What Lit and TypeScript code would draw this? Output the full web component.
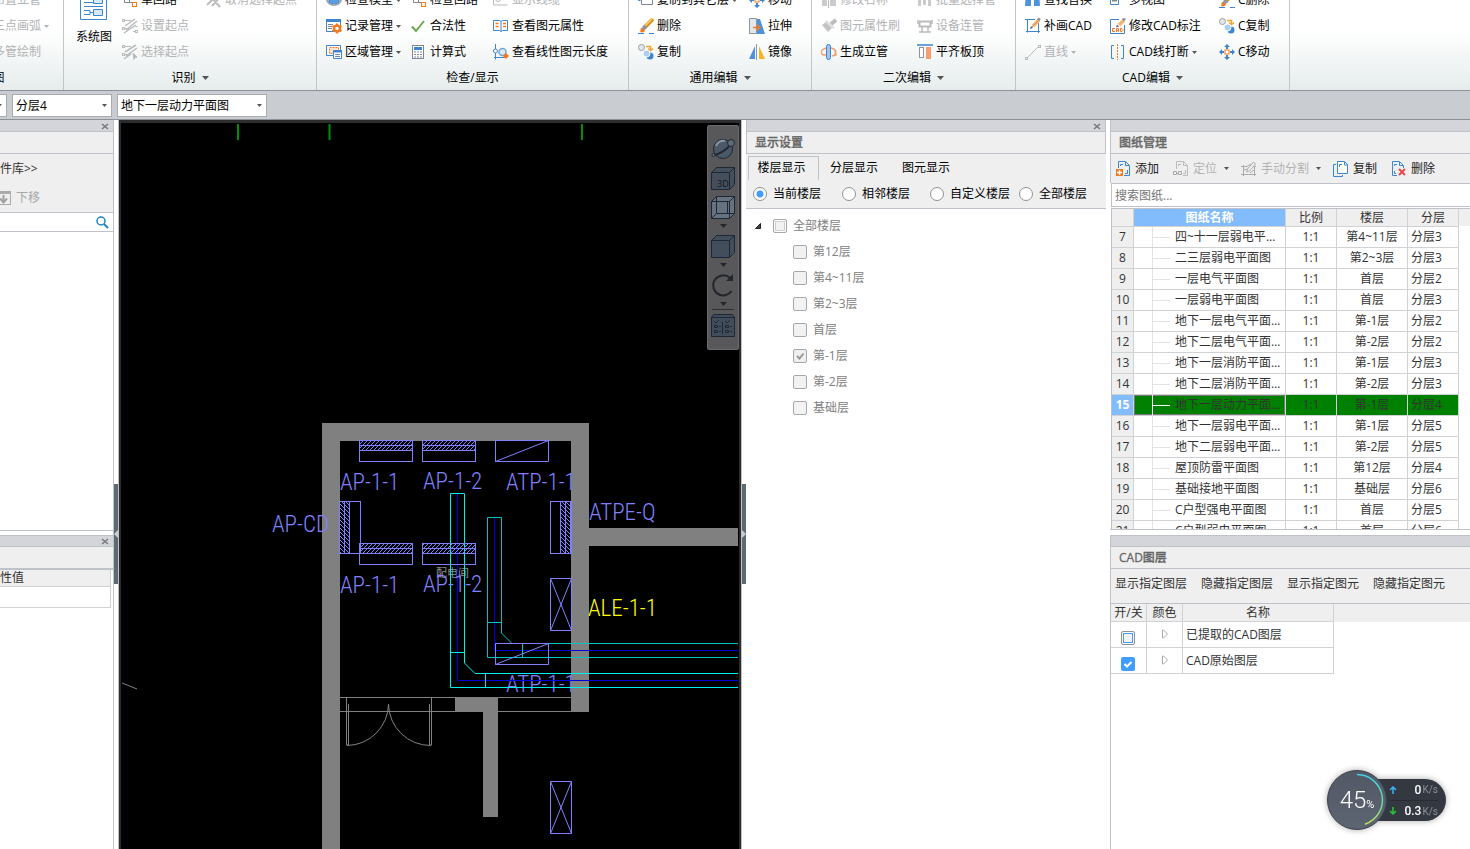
import { LitElement, html, svg, css, nothing, TemplateResult, SVGTemplateResult } from "lit";
import { customElement, property, state } from "lit/decorators.js";
import { classMap } from "lit/directives/class-map.js";

const BLUE = "#3d85d1";
const ORANGE = "#f47a20";
const MUTED = "#b9bbbd";

const glyphs: Record<string, SVGTemplateResult> = {
  loop: svg`<path d="M2.500 2v8.500h8M7.500 10V3" stroke="#7b8794"/><rect x="10.500" y="10.500" width="4" height="4" stroke="${ORANGE}"/>`,
  startSet: svg`<g stroke="${MUTED}"><rect x="0.500" y="1.500" width="2" height="2"/><rect x="0.500" y="9.500" width="2" height="2"/><rect x="13.500" y="12.500" width="2" height="2"/><path d="M3 2.500h6M3 10.500h4M11 13.500h2M13.500 8.500h2"/><path d="M13 1L3 8M15 3L4 12M14 7L2 15" stroke-width="1.500"/></g>`,
  startPick: svg`<g stroke="${MUTED}"><rect x="0.500" y="1.500" width="2" height="2"/><rect x="0.500" y="9.500" width="2" height="2"/><path d="M3 2.500h6M3 10.500h4"/><path d="M14 1L3 8M15 4L4 12M9 10L2 15" stroke-width="1.500"/><path d="M11 9l4 4-2 .500-1 2z" fill="${MUTED}"/></g>`,
  startCancel: svg`<g stroke="${MUTED}" stroke-width="2"><path d="M12 2L1 13M15 4L6 14M6 6l8 9M1 4l4 4"/></g>`,
  model: svg`<path d="M3 3l5-3 5 3v7l-5 3-5-3z" fill="#5a9fe6" stroke="#3777bd"/><path d="M1 7c0 8 14 8 14 0" stroke="#9aa5b0" stroke-width="2"/>`,
  record: svg`<path d="M.500 1.500h14v12H.500z" fill="#fff" stroke="${BLUE}"/><path d="M0 2.500h15" stroke="${BLUE}" stroke-width="3"/><path d="M2 6.500h5M2 8.500h4M2 10.500h4" stroke="#7b8794"/><circle cx="11" cy="10.500" r="3" stroke="${ORANGE}" stroke-width="2.500" fill="#fff"/><path d="M11 5.500v2M11 13.500v2M6.500 8l2 1M13.500 12l2 1M6.500 13l2-1M13.500 9l2-1" stroke="${ORANGE}" stroke-width="2"/>`,
  region: svg`<path d="M.500 1.500h14v10H.500z" fill="#fff" stroke="${BLUE}"/><path d="M3.500 3.500h9v6h-9z" fill="#fde3d0" stroke="${ORANGE}" stroke-dasharray="2 1"/><path d="M7.500 6.500h8v8h-8z" fill="#fff" stroke="${BLUE}"/><path d="M7 7.500h9" stroke="${BLUE}" stroke-width="2"/><path d="M9 10.500h5M9 12.500h5" stroke="#7b8794"/>`,
  check: svg`<path d="M1 8.500l4 4.500L13 3" stroke="#69a84f" stroke-width="2"/>`,
  calc: svg`<rect x="1.500" y="1.500" width="11" height="13" fill="#fff" stroke="#7b8794"/><path d="M3 4.500h8" stroke="${BLUE}" stroke-width="3"/><path d="M3 8h8M3 10.500h8M3 13h8" stroke="#7b8794" stroke-dasharray="2 1"/>`,
  lineView: svg`<path d="M.500 1v12h14" stroke="${MUTED}"/><circle cx="5" cy="7" r="2.500" stroke="${MUTED}"/>`,
  book: svg`<path d="M.500 2.500h6l1.500 1 1.500-1h5v10h-5l-1.500 1-1.500-1h-6zM8 3.500v10" fill="#fff" stroke="${BLUE}"/><path d="M2.500 5.500h3M2.500 8.500h3M10 5.500h3M10 8.500h3" stroke="${ORANGE}" stroke-width="1.500"/>`,
  length: svg`<path d="M2.500 0v13.500H14M1 13.500h1.500v2" stroke="${BLUE}"/><circle cx="2.500" cy="7" r="2" fill="#fff" stroke="${BLUE}"/><circle cx="9.500" cy="8" r="3.500" fill="#dce9f7" stroke="#7aa5d2" stroke-width="1.500"/><path d="M13 9l3 3-3 3-3-3z" fill="${ORANGE}"/>`,
  copyLayer: svg`<path d="M.500 0v8.500h2" stroke="${BLUE}"/><path d="M3.500 0h11v12.500h-11z" fill="#fff" stroke="#7b8794"/>`,
  brush: svg`<path d="M15 1L6 10" stroke="#d98d1e" stroke-width="4"/><path d="M15 0L6.500 8.500" stroke="#f7d46a" stroke-width="1.500"/><path d="M8 8l-2-1-3 4 2 2 4-3z" fill="#8a96a3"/><path d="M3 10c-1 1 0 3-1 4 2 1 5 0 5-2z" fill="${ORANGE}"/><path d="M0 15.500h6M11 15.500h5" stroke="${BLUE}"/>`,
  duplicate: svg`<circle cx="3.500" cy="3.500" r="3" fill="#e5e8eb" stroke="#959ea7"/><path d="M8 2.500h4.500v3M10 4.500l2.500 2 2.500-2" stroke="#f2a72c" stroke-width="1.500"/><circle cx="12" cy="12" r="3.500" fill="${BLUE}"/><circle cx="8.500" cy="9.500" r="3.500" fill="#a9cdf3" stroke="#fff"/>`,
  move: svg`<g fill="${BLUE}"><path d="M8 0l3 3H5zM8 16l3-3H5zM0 8l3-3v6zM16 8l-3-3v6z"/></g><path d="M8 2v3M8 11v3M2 8h3M11 8h3" stroke="${BLUE}" stroke-width="2"/><rect x="6" y="6" width="4" height="4" fill="#fff" stroke="${ORANGE}"/>`,
  stretch: svg`<path d="M.500.500h7v15h-7z" fill="#e3e7eb" stroke="#8b959f"/><path d="M8 1h3l5 15H8z" fill="#4c93dd"/><path d="M4 9.500h6M8 6.500l3 3-3 3" stroke="${ORANGE}" stroke-width="1.500"/>`,
  mirror: svg`<path d="M6 2v13H0z" fill="#4c93dd"/><path d="M10 2v13h6z" fill="#f5b427"/><path d="M7.500 0v16" stroke="#8b959f"/>`,
  rename: svg`<path d="M1 5h5v9H1zM9 3h6v11H9z" fill="#c9cbcd"/><path d="M7.500 0v16" stroke="${MUTED}"/>`,
  format: svg`<path d="M15 2l-5 4" stroke="${MUTED}" stroke-width="4"/><path d="M5 4l6 6-4 4-6-7z" fill="#c3c5c7"/><path d="M5 3l8 7" stroke="#dcdddf" stroke-width="2"/>`,
  riser: svg`<path d="M5 4C-1 6-1 10 3 11l3 0M10 4c5 1 6 5 3 7M11 12l4-1-1-4" stroke="#f2a072" stroke-width="1.500"/><rect x="5.500" y=".500" width="4" height="15" rx="2" fill="#9fc6f0" stroke="${BLUE}"/>`,
  batch: svg`<path d="M1 3h3v11H1zM6 1h3v12H6zM11 5h3v9h-3z" fill="#c9cbcd"/>`,
  device: svg`<rect x="2.500" y="3.500" width="11" height="5" stroke="${MUTED}" stroke-width="2"/><path d="M1 2v4M15 2v4M5 9v5M11 9v5M2 14h12" stroke="${MUTED}" stroke-width="1.500"/>`,
  align: svg`<path d="M0 1h16" stroke="${BLUE}" stroke-width="1.500"/><rect x="2.500" y="3.500" width="4" height="10" fill="#fff" stroke="#8b959f"/><path d="M9 3h5v12H9z" fill="#fa9b71"/>`,
  find: svg`<path d="M1 0h5v14H0zM9 0h5l1 14H9zM5 4h5v3H5z" fill="#4c93dd"/>`,
  addCad: svg`<path d="M2.500 1v13.500M0 1.500h10M13.500 5v10M1 13.500h14" stroke="${BLUE}"/><path d="M14 2L8 8" stroke="#f0b873" stroke-width="3.500"/><path d="M13 3l-6 6" stroke="#d98d3e" stroke-width="1"/><path d="M14 3l2-2-2-1-2 1z" fill="#7b8794"/><path d="M6 8l2 2-3 1z" fill="#5b6670"/>`,
  line: svg`<path d="M3 13L13 3" stroke="${MUTED}"/><rect x=".500" y="13.500" width="2" height="2" stroke="${MUTED}"/><rect x="13.500" y="1.500" width="2" height="2" stroke="${MUTED}"/>`,
  views: svg`<path d="M.500 0h8v12.500h-8zM9 5.500h6V0" stroke="${BLUE}"/><path d="M2 4.500h5M2 8.500h5" stroke="#7b8794" stroke-width="2"/>`,
  dimension: svg`<path d="M9 1.500H.500v14h14V7" stroke="${BLUE}"/><path d="M14 2L9 7" stroke="#f0b873" stroke-width="3.500"/><path d="M14 3l2-2-2-1-2 1z" fill="#7b8794"/><path d="M7 6.500l2 2-3 1z" fill="#5b6670"/><path d="M5 10.500H2.500v3H5M6.500 14v-3.500h2V14M6.500 12.500h2M10.500 10.500H12l1 1v1l-1 1h-1.500z" stroke="${ORANGE}"/>`,
  breakLine: svg`<path d="M4 1.500H1.500v13H4M11 1.500h2.500v13H11" stroke="${BLUE}"/><path d="M7.500 0v16" stroke="${ORANGE}" stroke-dasharray="2 1"/>`,
  moveDown: svg`<rect x=".500" y="1.500" width="14" height="13" stroke="#a9abad"/><path d="M0 2.500h15" stroke="#a9abad" stroke-width="3"/><path d="M7.500 5v7M4 8.500l3.500 4 3.500-4" stroke="#a0a2a4" stroke-width="2"/>`,
  search: svg`<circle cx="7" cy="7" r="4" stroke="#2383c4" stroke-width="1.500"/><path d="M10 10l4 4" stroke="#2383c4" stroke-width="2"/>`,
  sheetAdd: svg`<path d="M3.500 7V.500h7l4 4v10H9" stroke="${BLUE}" fill="none"/><path d="M10.500 1v3.500H14M5.500 5V3.500H8M12.500 9v3.500H10" stroke="${BLUE}"/><path d="M1 8h7v7H1z" fill="${ORANGE}"/><path d="M4.500 9v5M2 11.500h5" stroke="#fff" stroke-width="1.500"/>`,
  sheetPin: svg`<path d="M3.500 8V.500h7l4 4v10H10M10.500 1v3.500H14M5.500 5V3.500H8M12.500 9v3.500H10" stroke="${MUTED}"/><path d="M.500 10.500h3v3h-3zM5.500 10.500h3v3h-3zM3 12.500h3" stroke="#a4a6a8"/>`,
  split: svg`<g stroke="#a9abad"><path d="M0 5.500h6M13 5.500h2M0 13.500h15M2.500 4v11M13.500 6v9"/><path d="M12.500 1l2 2-6 7-3 1 1-3zM5 6l5-3M3 9l3-1M9 12l4-3"/></g>`,
  sheetCopy: svg`<path d="M4.500.500h7l3 3v9h-10z" fill="#fff" stroke="${BLUE}"/><path d="M11.500 1v3H15" stroke="${BLUE}"/><path d="M3 3.500H.500v12h9V14" stroke="${BLUE}"/><path d="M6.500 6V3.500H9" stroke="${BLUE}"/>`,
  sheetDelete: svg`<path d="M6 14.500H1.500V.500h7l4 4V7M8.500 1v3.500H12M3.500 5V3.500H6M5 12.500H3.500V10" stroke="${BLUE}"/><path d="M8 8l6 6M14 8l-6 6" stroke="#e8484c" stroke-width="2"/>`,
};

const icon = (name: string) =>
  html`<svg class="icon" width="16" height="16" viewBox="0 0 16 16" fill="none" aria-hidden="true">${glyphs[name]}</svg>`;

const caret = html`<svg class="caret" width="7" height="4" viewBox="0 0 7 4" aria-hidden="true"><path d="M0 0h7L3.500 4z" fill="currentColor"/></svg>`;

const base = css`
  * { box-sizing: border-box; }
  :host { font: 12px/16px "Open Sans", "Noto Sans CJK SC", sans-serif; color: #000; }
  button { font: inherit; color: inherit; background: none; border: 0; padding: 0; margin: 0; display: flex; align-items: center; white-space: nowrap; }
  button:disabled { color: #b1b3b5; }
  .icon { flex: none; display: block; }
  .caret { flex: none; color: #555; margin-left: 4px; }
  h2 { margin: 0; font: inherit; }
`;

type Cmd = { i?: string; t: string; off?: boolean; menu?: boolean } | null;

@customElement("ribbon-group")
class RibbonGroup extends LitElement {
  @property() label = "";
  @property({ type: Boolean }) menu = false;
  @property({ attribute: false }) columns: Cmd[][] = [];
  @property() tracks = "";
  static styles = [base, css`
    :host { display: flex; flex-direction: column; flex: none; border-right: 1px solid #c3c6c9; }
    .body { flex: 1; display: grid; padding-left: 9px; }
    .col { display: flex; flex-direction: column; }
    .cell { height: 26px; display: flex; align-items: center; }
    .cmd { gap: 3px; height: 24px; }
    .cmd .caret { margin-left: 0; width: 5px; height: 3px; }
    .cmd:disabled .caret { color: #b1b3b5; }
    .name { height: 26px; display: flex; align-items: center; justify-content: center; gap: 3px; }
    .name .caret { margin-left: 3px; }
  `];
  render() {
    return html`<div class="body" style="grid-template-columns:${this.tracks}">
        <slot></slot>
        ${this.columns.map((col) => html`<div class="col">${col.map((c) => html`<div class="cell">${c
          ? html`<button class="cmd" ?disabled=${c.off}>${c.i ? icon(c.i) : nothing}${c.t}${c.menu ? caret : nothing}</button>` : nothing}</div>`)}</div>`)}
      </div>
      <div class="name">${this.label}${this.menu ? caret : nothing}</div>`;
  }
}

@customElement("app-ribbon")
class AppRibbon extends LitElement {
  static styles = [base, css`
    :host { display: flex; align-items: flex-end; height: 91px; overflow: hidden; border-bottom: 1px solid #8c9296; background: linear-gradient(#fff 0 35%, #e6ecec); }
    ribbon-group { height: 104px; margin-bottom: -1px; }
    .edge { width: 142px; margin-left: -78px; }
    .recognise { width: 253px; }
    .inspect { width: 312px; }
    .general { width: 183px; }
    .second { width: 204px; }
    .cad { width: 274px; }
    .system { flex-direction: column; width: 42px; padding-top: 6px; gap: 8px; align-self: start; }
  `];
  render() {
    return html`
      <ribbon-group class="edge" label="绘图" tracks="43px 1fr" .columns=${[[], [
        { i: "riser", t: "布置立管", off: true }, { i: "line", t: "三点画弧", off: true, menu: true }, { i: "batch", t: "多管绘制", off: true }]]}></ribbon-group>
      <ribbon-group class="recognise" label="识别" menu tracks="49px 84px 1fr" .columns=${[
        [{ i: "loop", t: "单回路" }, { i: "startSet", t: "设置起点", off: true }, { i: "startPick", t: "选择起点", off: true }],
        [{ i: "startCancel", t: "取消选择起点", off: true }]]}>
        <button class="system">
          <svg width="28" height="28" viewBox="0 0 28 28" fill="none" aria-hidden="true"><path d="M.500.500h26v26H.500z" fill="#fff" stroke="${BLUE}"/><path d="M4 9.500h9M4 13.500h19M4 17.500h6v4H4M10 19.500h4" stroke="${BLUE}"/><path d="M13.500 5.500h9v5h-9zM13.500 16.500h9v6h-9z" fill="#d6e8fb" stroke="${BLUE}"/></svg>
          系统图
        </button>
      </ribbon-group>
      <ribbon-group class="inspect" label="检查/显示" tracks="85px 82px 1fr" .columns=${[
        [{ i: "model", t: "检查模型", menu: true }, { i: "record", t: "记录管理", menu: true }, { i: "region", t: "区域管理", menu: true }],
        [{ i: "loop", t: "检查回路" }, { i: "check", t: "合法性" }, { i: "calc", t: "计算式" }],
        [{ i: "lineView", t: "显示线缆", off: true }, { i: "book", t: "查看图元属性" }, { i: "length", t: "查看线性图元长度" }]]}></ribbon-group>
      <ribbon-group class="general" label="通用编辑" menu tracks="111px 1fr" .columns=${[
        [{ i: "copyLayer", t: "复制到其它层", menu: true }, { i: "brush", t: "删除" }, { i: "duplicate", t: "复制" }],
        [{ i: "move", t: "移动" }, { i: "stretch", t: "拉伸" }, { i: "mirror", t: "镜像" }]]}></ribbon-group>
      <ribbon-group class="second" label="二次编辑" menu tracks="96px 1fr" .columns=${[
        [{ i: "rename", t: "修改名称", off: true }, { i: "format", t: "图元属性刷", off: true }, { i: "riser", t: "生成立管" }],
        [{ i: "batch", t: "批量选择管", off: true }, { i: "device", t: "设备连管", off: true }, { i: "align", t: "平齐板顶" }]]}></ribbon-group>
      <ribbon-group class="cad" label="CAD编辑" menu tracks="85px 109px 1fr" .columns=${[
        [{ i: "find", t: "查找替换" }, { i: "addCad", t: "补画CAD" }, { i: "line", t: "直线", off: true, menu: true }],
        [{ i: "views", t: "多视图" }, { i: "dimension", t: "修改CAD标注" }, { i: "breakLine", t: "CAD线打断", menu: true }],
        [{ i: "brush", t: "C删除" }, { i: "duplicate", t: "C复制" }, { i: "move", t: "C移动" }]]}></ribbon-group>`;
  }
}

const HATCH_H = (x: number, y: number) => svg`<g stroke="#8080ff">
  <rect x=${x} y=${y} width="53" height="21" fill="none"/>
  <rect x=${x} y=${y} width="53" height="10" fill="url(#hatch)"/><path d="M${x} ${y + 5}h53"/></g>`;
const HATCH_V = (x: number, y: number, hx: number) => svg`<g stroke="#8080ff">
  <rect x=${x} y=${y} width="21" height="52" fill="none"/>
  <rect x=${hx} y=${y} width="10" height="52" fill="url(#hatch-back)"/><path d="M${hx + 5} ${y}v52"/></g>`;
const SLASH = (x: number, y: number) => svg`<path d="M${x} ${y}h53v21h-53zl0 21l53 -21" fill="none" stroke="#8080ff"/>`;
const CROSS = (x: number, y: number) => svg`<path d="M${x} ${y}h21v52h-21zl21 52M${x + 21} ${y}l-21 52" fill="none" stroke="#8080ff"/>`;

const tags: [number, number, string][] = [
  [340, 490, "AP-1-1"], [423, 489, "AP-1-2"], [272, 532, "AP-CD"],
  [589, 520, "ATPE-Q"], [340, 593, "AP-1-1"], [423, 592, "AP-1-2"],
];

@customElement("cad-view")
class CadView extends LitElement {
  static styles = [base, css`
    :host { display: block; position: relative; flex: 1; min-width: 0; background: #000; border: 2px solid #2a2c2e; border-top-width: 3px; border-bottom: 0; overflow: hidden; }
    .plan { display: block; width: 100%; height: 100%; }
    .tag { font: 300 23px "Noto Sans ExtraCondensed Light", "Noto Sans ExtraCondensed", "Liberation Sans Narrow", "Roboto Condensed", sans-serif; fill: #8080ff; }
    .alarm { fill: #ff0; }
    .room { font: 11px "Noto Sans CJK SC", sans-serif; fill: #909090; }
    .tools { position: absolute; top: 2px; right: 0; width: 32px; height: 225px; padding-top: 11px; background: #58585a; border: 1px solid #6a6a6c; border-radius: 2px; display: flex; flex-direction: column; align-items: center; color: #23272c; }
    .tools button { flex: none; height: 24px; margin-bottom: 5px; }
    .tools .caret { margin: 0 0 6px; color: #23272c; }
    .tools hr { flex: none; width: 22px; margin: -3px 0 3px; border: 0; border-top: 1px solid #2c3036; }
  `];
  private tool(label: string, art: SVGTemplateResult) {
    return html`<button aria-label=${label}><svg width="24" height="24" viewBox="0 0 24 24" fill="none" stroke="#1e2734">${art}</svg></button>`;
  }
  render() {
    return html`<svg class="plan" aria-label="平面图">
        <defs>
          <pattern id="hatch" width="4" height="4" patternUnits="userSpaceOnUse"><path d="M-1 5L5 -1M-1 1L1 -1M3 5L5 3" stroke="#8080ff"/></pattern>
          <pattern id="hatch-back" width="4" height="4" patternUnits="userSpaceOnUse"><path d="M-1 -1L5 5M-1 3L1 5M3 -1L5 1" stroke="#8080ff"/></pattern>
        </defs>
        <g transform="translate(-121 -123)">
          <path d="M238 124v16M329.500 124v16M582 124v16" stroke="#008f00" stroke-width="2"/>
          <path d="M122 683l15 6" stroke="#808080"/>
          <text class="tag" x="506" y="490">ATP-1-1</text>
          <text class="tag" x="506" y="692">ATP-1-1</text>
          <path d="M322 849V423h267v105h149v18H589v166h-18V441H340v408z" fill="#808080"/>
          <path d="M455 697h43v120h-15V712h-28z" fill="#808080"/>
          <path d="M340 697.500h231M340 711.500h249" stroke="#808080" fill="none"/>
          <g fill="none" stroke="#808080">
            <path d="M346.500 697v48M348.500 704v41h-2v-41M431.500 697v48M429.500 704v41h2v-41"/>
            <path d="M347 745.500A42 42 0 0 0 388.500 704A42 42 0 0 0 431 745.500"/>
          </g>
          <text class="room" x="436" y="577">配电间</text>
          <g fill="none">
            <path d="M457.500 493V680.500H738M494.500 517V650.500H738" stroke="#0000e0"/>
            <path d="M738 657.500H487.500V517.500h14V633L512 643.500H738M487 622.500h14M522.500 643v14" stroke="#00c4c4"/>
            <path d="M738 687.500H450.500V493.500h14V663L475 673.500H738M450 652.500h14M485.500 673v14" stroke="#00f0f0"/>
          </g>
          ${HATCH_H(359.5, 440.5)}${HATCH_H(422.5, 440.5)}${HATCH_H(359.5, 543.5)}${HATCH_H(422.5, 543.5)}
          ${HATCH_V(339.5, 501.5, 339.5)}${HATCH_V(550.5, 501.5, 560.5)}
          ${SLASH(495.5, 440.5)}${SLASH(495.5, 643.5)}${CROSS(550.5, 578.5)}${CROSS(550.5, 781.5)}
          ${tags.map(([x, y, t]) => svg`<text class="tag" x=${x} y=${y}>${t}</text>`)}
          <text class="tag alarm" x="588" y="616">ALE-1-1</text>
        </g>
      </svg>
      <div class="tools">
        ${this.tool("动态观察", svg`<circle cx="12" cy="12" r="9.500" fill="#4b5867"/><path d="M5 9c1-4 6-6 9-5" stroke="#8d97a2" stroke-width="2"/><path d="M2 18c5 0 14-5 18-11" stroke-width="2"/><circle cx="20" cy="6" r="3.500" fill="#5d6a79"/><circle cx="2.500" cy="18" r="1.500" fill="#6d7886"/>`)}
        ${this.tool("三维", svg`<path d="M.500 6.500l5-5h18v17l-5 5H.500z" fill="#454f5c"/><path d="M.500 6.500h18v17M18.500 6.500l5-5"/><text x="6" y="21" font-size="9" stroke="none" fill="#11161d">3D</text>`)}
        ${this.tool("线框", svg`<path d="M.500 6.500l5-5h18v17l-5 5H.500z" fill="#66727f"/><path d="M.500 6.500h18v17M18.500 6.500l5-5M5.500 2v16.500h18M5.500 18.500l-5 5M16.500 7v12"/>`)}
        ${caret}
        ${this.tool("视图方向", svg`<path d="M.500 6.500l5-5h18v17l-5 5H.500z" fill="#434e5c"/><path d="M.500 6.500h18v17M18.500 6.500l5-5"/>`)}
        ${caret}
        ${this.tool("旋转", svg`<path d="M19 5a10 10 0 1 0 1.500 13" stroke="#23272c" stroke-width="2"/><path d="M22 1v7h-7z" fill="#23272c" stroke="none"/>`)}
        ${caret}
        <hr />
        ${this.tool("显示设置", svg`<path d="M.500 4.500h23v19H.500zM.500 4.500l2-3h19l2 3" fill="#414d5b"/><path d="M3 8l2 2 3-3M14 8l2 2 3-3M11.500 9v12M3.500 12.500h3v2h-3zM3.500 17.500h3v2h-3zM14.500 12.500h3v2h-3zM14.500 17.500h3v2h-3zM8 13.500h2M8 18.500h2M19 13.500h2M19 18.500h2"/>`)}
      </div>`;
  }
}

const panel = css`
  .bar { flex: none; height: 12px; background: #d3d5db; border: 1px solid #bfc2c8; border-top: 0; border-right: 0; display: flex; justify-content: flex-end; align-items: center; padding-right: 4px; }
  .close { width: 8px; height: 8px; color: #777; }
  .title { flex: none; height: 22px; background: #efefef; border-bottom: 1px solid #bfc2c8; border-left: 1px solid #bfc2c8; display: flex; align-items: center; padding-left: 8px; color: #666; font-weight: 500; -webkit-text-stroke: 0.3px #666; }
`;

const bar = (closable: boolean) => html`<div class="bar">${closable
  ? html`<button class="close" aria-label="关闭"><svg width="8" height="8" viewBox="0 0 8 8" fill="none"><path d="M1 2l6 5M7 2L1 7" stroke="#777" stroke-width="1.500"/></svg></button>` : nothing}</div>`;

@customElement("component-dock")
class ComponentDock extends LitElement {
  static styles = [base, panel, css`
    :host { flex: none; width: 114px; display: flex; flex-direction: column; background: #fff; border-right: 1px solid #bfc2c8; color: #333; }
    .title, .bar { border-left: 0; }
    .top { flex: none; height: 411px; display: flex; flex-direction: column; border-bottom: 1px solid #bfc2c8; }
    .cmds { height: 59px; background: #efefef; border-bottom: 1px solid #bfc2c8; padding-top: 3px; }
    .cmds button { height: 24px; gap: 4px; margin-bottom: 5px; }
    .cmds button:disabled { color: #a5a7a9; }
    .cmds .move { margin-left: -4px; }
    .find { display: flex; align-items: center; height: 19px; border-bottom: 1px solid #bfc2c8; padding-right: 3px; }
    input { flex: 1; min-width: 0; border: 0; outline: 0; font: inherit; height: 17px; }
    .bottom { flex: 1; margin-top: 4px; border-top: 1px solid #bfc2c8; }
    .bottom .bar { height: 11px; }
    .bottom .title { height: 23px; border-bottom-width: 2px; }
    table { width: 111px; border-collapse: separate; border-spacing: 0; }
    th { height: 17px; padding: 0; font-weight: 400; text-align: left; background: #efefef; border: 1px solid #cfd1d3; border-width: 0 1px 1px 0; line-height: 16px; }
    td { height: 21px; padding: 0; border: 1px solid #cfd1d3; border-width: 0 1px 1px 0; }
  `];
  render() {
    return html`<section class="top">${bar(true)}<div class="title"></div>
        <div class="cmds"><button>件库&gt;&gt;</button><button class="move" disabled>${icon("moveDown")}下移</button></div>
        <div class="find"><input aria-label="搜索构件" />${icon("search")}</div>
      </section>
      <section class="bottom">${bar(true)}<div class="title"></div>
        <table><thead><tr><th>性值</th></tr></thead><tbody><tr><td></td></tr></tbody></table>
      </section>`;
  }
}

@customElement("dock-splitter")
class DockSplitter extends LitElement {
  @property() side = "left";
  static styles = [base, css`
    :host { flex: none; width: 5px; padding-top: 364px; background: #fff; border-right: 1px solid #bfc2c8; }
    :host([side="right"]) { border-right: 0; border-left: 1px solid #bfc2c8; }
    button { width: 4px; height: 100px; background: #5d6a74; }
  `];
  render() {
    return html`<button aria-label="折叠面板"><svg width="4" height="8" viewBox="0 0 4 8"><path d=${this.side === "left" ? "M4 0v8L0 4z" : "M0 0v8l4-4z"} fill="#c9ced2"/></svg></button>`;
  }
}

@customElement("display-dock")
class DisplayDock extends LitElement {
  @state() private mode = 0;
  static styles = [base, panel, css`
    :host { flex: none; width: 360px; display: flex; flex-direction: column; background: #fff; }
    .bar, .title { border-right: 1px solid #bfc2c8; }
    .tabs { flex: none; display: flex; height: 26px; padding: 2px 2px 0; background: #efefef; }
    .tab { width: 72px; height: 24px; justify-content: center; padding-right: 4px; }
    .tab.on { width: 71px; margin-right: 1px; border: 1px solid #bfc2c8; border-bottom: 0; padding-bottom: 2px; }
    .modes { flex: none; display: grid; grid-template-columns: 89px 88px 89px 1fr; align-items: center; height: 29px; padding-left: 7px; background: #efefef; border-bottom: 1px solid #bfc2c8; }
    label { display: flex; align-items: center; white-space: nowrap; gap: 6px; }
    input { appearance: none; margin: 0; width: 14px; height: 14px; flex: none; border: 1px solid #8f9193; }
    .radio { border-radius: 50%; background: #fff; }
    .radio:checked { background: radial-gradient(#409cff 0 3px, #fff 4px); }
    .tree { margin: 0; padding: 4px 0 0 27px; list-style: none; color: #808080; }
    .tree ul { margin: 0; padding: 0 0 0 20px; list-style: none; }
    .node { height: 26px; position: relative; }
    .box { border-radius: 2px; background: #f2f2f2; border-color: #a5a7a9; }
    .box.mixed { box-shadow: inset 0 0 0 1px #fff, inset 0 0 0 2px #cfcfcf; }
    .box:checked { background: #efefef url("data:image/svg+xml,%3Csvg xmlns='http://www.w3.org/2000/svg' width='12' height='12'%3E%3Cpath d='M3 6l2.500 2.500L9.500 3.500' fill='none' stroke='%23999' stroke-width='2'/%3E%3C/svg%3E"); }
    .twist { position: absolute; left: -19px; top: 9px; }
  `];
  render() {
    const floors = ["第12层", "第4~11层", "第2~3层", "首层", "第-1层", "第-2层", "基础层"];
    return html`${bar(true)}<h2 class="title">显示设置</h2>
      <div class="tabs">${["楼层显示", "分层显示", "图元显示"].map((t, i) => html`<button class=${classMap({ tab: true, on: i === 0 })}>${t}</button>`)}</div>
      <div class="modes">${["当前楼层", "相邻楼层", "自定义楼层", "全部楼层"].map((t, i) => html`<label><input class="radio" type="radio" name="mode" .checked=${i === this.mode} @change=${() => (this.mode = i)} />${t}</label>`)}</div>
      <ul class="tree"><li>
        <label class="node"><svg class="twist" width="8" height="8" viewBox="0 0 8 8"><path d="M6.500 1.500v5h-5z" fill="#444" stroke="#222"/></svg><input class="box mixed" type="checkbox" disabled />全部楼层</label>
        <ul>${floors.map((f, i) => html`<li><label class="node"><input class="box" type="checkbox" disabled .checked=${i === 4} />${f}</label></li>`)}</ul>
      </li></ul>`;
  }
}

const drawings: [number, string, string, string][] = [
  [7, "四~十一层弱电平面图", "第4~11层", "分层3"], [8, "二三层弱电平面图", "第2~3层", "分层3"],
  [9, "一层电气平面图", "首层", "分层2"], [10, "一层弱电平面图", "首层", "分层3"],
  [11, "地下一层电气平面图", "第-1层", "分层2"], [12, "地下二层电气平面图", "第-2层", "分层2"],
  [13, "地下一层消防平面图", "第-1层", "分层3"], [14, "地下二层消防平面图", "第-2层", "分层3"],
  [15, "地下一层动力平面图", "第-1层", "分层4"], [16, "地下一层弱电平面图", "第-1层", "分层5"],
  [17, "地下二层弱电平面图", "第-2层", "分层5"], [18, "屋顶防雷平面图", "第12层", "分层4"],
  [19, "基础接地平面图", "基础层", "分层6"], [20, "C户型强电平面图", "首层", "分层5"],
  [21, "C户型弱电平面图", "首层", "分层6"],
];

@customElement("drawing-dock")
class DrawingDock extends LitElement {
  static styles = [base, panel, css`
    :host { flex: none; width: 360px; display: flex; flex-direction: column; background: #fff; color: #333; }
    .sheets { flex: none; height: 410px; display: flex; flex-direction: column; overflow: hidden; border-bottom: 1px solid #bfc2c8; }
    .tools { flex: none; display: grid; grid-template-columns: 58px 68px 92px 58px 1fr; height: 29px; padding-left: 4px; background: #efefef; border-left: 1px solid #bfc2c8; }
    .tools button { gap: 4px; color: #222; }
    .tools button:disabled { color: #b1b3b5; }
    .tools .caret { margin-left: 3px; width: 5px; height: 3px; }
    .query { flex: none; height: 24px; margin-left: 1px; border: 1px solid #bfc2c8; border-right: 0; padding: 0 3px; font: inherit; outline: 0; border-radius: 0; }
    .query::placeholder { color: #777; opacity: 1; }
    .gridwrap { flex: 1; min-height: 0; overflow: hidden; margin: 1px 0 0 1px; border-top: 1px solid #bfc2c8; border-left: 1px solid #bfc2c8; background: linear-gradient(#efefef 0 17px, #fff 17px); }
    table { table-layout: fixed; border-collapse: separate; border-spacing: 0; }
    th, td { padding: 0; font-weight: 400; text-align: center; white-space: nowrap; overflow: hidden; border: 1px solid #d0d2d4; border-width: 0 1px 1px 0; line-height: 16px; }
    th { background: #efefef; }
    .list { width: 347px; }
    .list thead th { height: 18px; }
    .list thead .key { background: #82bcfc; color: #fff; font-weight: 700; }
    .list td, .list tbody th { height: 21px; }
    .list .file { text-align: left; padding: 0 3px 0 18px; }
    .file span { display: flex; align-items: center; height: 20px; border-left: 1px solid #e2e3e5; }
    .file span::before { content: ""; flex: none; width: 17px; margin-right: 5px; border-top: 1px solid #e2e3e5; }
    .file b { font-weight: 400; overflow: hidden; text-overflow: ellipsis; }
    .list .sub { text-align: left; padding-left: 3px; }
    .picked td { background: #008000; }
    .picked .file { box-shadow: inset 0 0 0 1px #777; }
    .picked .file span, .picked .file span::before { border-color: #fff; }
    .list .picked th { background: #82bcfc; color: #fff; font-weight: 700; }
    .layers { flex: 1; margin-top: 5px; border-left: 1px solid #bfc2c8; }
    .layers .bar, .layers .title { border-left: 0; }
    .layers .bar { border-top: 1px solid #bfc2c8; }
    .cmds { display: flex; gap: 14px; padding: 0 0 4px 4px; height: 35px; background: #efefef; border-bottom: 1px solid #bfc2c8; }
    .heads { background: linear-gradient(#efefef 0 18px, #fff 18px); }
    .set { width: 223px; }
    .set th { height: 18px; line-height: 17px; }
    .set td { height: 26px; }
    .set .name { text-align: left; padding-left: 3px; }
    input[type="checkbox"] { appearance: none; display: block; width: 14px; height: 14px; margin: 6px 0 0 10px; border: 1px solid #8f9193; border-radius: 2px; background: #f3f3f3; box-shadow: inset 0 0 0 1px #fff, inset 0 0 0 2px #409cff; }
    input[type="checkbox"]:checked { border-color: #409cff; box-shadow: none; background: #409cff url("data:image/svg+xml,%3Csvg xmlns='http://www.w3.org/2000/svg' width='12' height='12'%3E%3Cpath d='M2.500 6l2.500 2.500L9.500 4' fill='none' stroke='%23fff' stroke-width='2'/%3E%3C/svg%3E"); }
  `];
  render() {
    const layers: [string, boolean][] = [["已提取的CAD图层", false], ["CAD原始图层", true]];
    return html`<section class="sheets">${bar(false)}<h2 class="title">图纸管理</h2>
        <div class="tools">
          <button>${icon("sheetAdd")}添加</button>
          <button disabled>${icon("sheetPin")}定位${caret}</button>
          <button disabled>${icon("split")}手动分割${caret}</button>
          <button>${icon("sheetCopy")}复制</button>
          <button>${icon("sheetDelete")}删除</button>
        </div>
        <input class="query" type="text" placeholder="搜索图纸..." aria-label="搜索图纸" />
        <div class="gridwrap"><table class="list">
          <colgroup><col width="22" /><col width="152" /><col width="51" /><col width="71" /><col width="51" /></colgroup>
          <thead><tr><th></th><th class="key">图纸名称</th><th>比例</th><th>楼层</th><th>分层</th></tr></thead>
          <tbody>${drawings.map(([n, name, floor, sub]) => html`<tr class=${classMap({ picked: n === 15 })}><th>${n}</th><td class="file"><span><b>${name}</b></span></td><td>1:1</td><td>${floor}</td><td class="sub">${sub}</td></tr>`)}</tbody>
        </table></div>
      </section>
      <section class="layers">${bar(false)}<h2 class="title">CAD图层</h2>
        <div class="cmds">${["显示指定图层", "隐藏指定图层", "显示指定图元", "隐藏指定图元"].map((t) => html`<button>${t}</button>`)}</div>
        <div class="heads"><table class="set">
          <colgroup><col width="36" /><col width="36" /><col width="151" /></colgroup>
          <thead><tr><th>开/关</th><th>颜色</th><th>名称</th></tr></thead>
          <tbody>${layers.map(([name, on]) => html`<tr><td><input type="checkbox" aria-label=${name} .checked=${on} /></td><td><svg width="8" height="10" viewBox="0 0 8 10" fill="none"><path d="M1.500 1v8h1l4-4-4-4z" stroke="#aaa"/></svg></td><td class="name">${name}</td></tr>`)}</tbody>
        </table></div>
      </section>`;
  }
}

@customElement("speed-meter")
class SpeedMeter extends LitElement {
  static styles = [base, css`
    :host { position: fixed; right: 24px; bottom: 19px; width: 119px; height: 60px; display: flex; align-items: center; filter: drop-shadow(0 0 3px #0005); }
    .dial { position: relative; width: 60px; height: 60px; z-index: 1; }
    .num { position: absolute; inset: 0; display: flex; align-items: baseline; justify-content: center; color: #fff; font: 300 24px/60px Roboto, sans-serif; }
    .num small { font-size: 11px; font-weight: 400; }
    .rates { flex: 1; margin-left: -18px; height: 42px; padding: 0 8px 0 20px; border-radius: 0 21px 21px 0; background: #343841; display: grid; grid-template-rows: 1fr 1fr; }
    .rate { display: flex; align-items: center; justify-content: flex-end; color: #fff; font: 500 12px Roboto, sans-serif; }
    .rate + .rate { border-top: 1px solid #292c33; }
    .rate svg { margin-right: auto; }
    .rate i { font-style: normal; font-weight: 400; font-size: 10px; color: #8b8f96; margin-left: 1px; }
  `];
  private rate(value: string, color: string, d: string): TemplateResult {
    return html`<div class="rate"><svg width="8" height="8" viewBox="0 0 8 8" fill="none"><path d=${d} stroke=${color} stroke-width="1.500"/></svg>${value}<i>K/s</i></div>`;
  }
  render() {
    return html`<div class="dial">
        <svg width="60" height="60" viewBox="0 0 60 60" fill="none">
          <defs><linearGradient id="disc" x2="0" y2="1"><stop stop-color="#525865"/><stop offset="1" stop-color="#5d6472"/></linearGradient>
          <linearGradient id="arc" x2="0" y2="1"><stop stop-color="#3fd0e8"/><stop offset=".6" stop-color="#62dca0"/><stop offset="1" stop-color="#c8e05a"/></linearGradient></defs>
          <circle cx="30" cy="30" r="29.500" fill="url(#disc)" stroke="#3c414b"/><path d="M30 4.500A25.500 25.500 0 0 1 38 54.200" stroke="url(#arc)" stroke-width="1.500"/>
        </svg>
        <div class="num">45<small>%</small></div>
      </div>
      <div class="rates">${this.rate("0", "#3fb2f5", "M4 8V1M1 4l3-3 3 3")}${this.rate("0.3", "#2fbf3f", "M4 0v7M1 4l3 3 3-3")}</div>`;
  }
}

@customElement("app-root")
class AppRoot extends LitElement {
  static styles = [base, css`
    :host { display: flex; flex-direction: column; height: 100vh; overflow: hidden; background: #fff; }
    .context { flex: none; height: 29px; display: flex; align-items: center; gap: 5px; background: #c9ccd1; border-bottom: 1px solid #8c9296; }
    .pick { position: relative; display: flex; align-items: center; }
    .pick .caret { position: absolute; right: 5px; pointer-events: none; width: 5px; height: 3px; }
    select { appearance: none; width: 100%; height: 23px; margin: 0; padding: 2px 16px 0 3px; font: inherit; color: #000; background: #fff; border: 1px solid #a9acb0; border-radius: 0; }
    .floor { width: 7px; }
    .floor select { padding: 0; border-left: 0; }
    .layer { width: 100px; }
    .sheet { width: 150px; }
    main { flex: 1; min-height: 0; display: flex; }
    drawing-dock { margin-left: 4px; }
  `];
  render() {
    return html`<app-ribbon></app-ribbon>
      <div class="context">
        <div class="pick floor"><select aria-label="楼层"></select>${caret}</div>
        <div class="pick layer"><select aria-label="分层"><option>分层4</option></select>${caret}</div>
        <div class="pick sheet"><select aria-label="图纸"><option>地下一层动力平面图</option></select>${caret}</div>
      </div>
      <main>
        <component-dock></component-dock>
        <dock-splitter side="left"></dock-splitter>
        <cad-view></cad-view>
        <dock-splitter side="right"></dock-splitter>
        <display-dock></display-dock>
        <drawing-dock></drawing-dock>
      </main>
      <speed-meter></speed-meter>`;
  }
}
